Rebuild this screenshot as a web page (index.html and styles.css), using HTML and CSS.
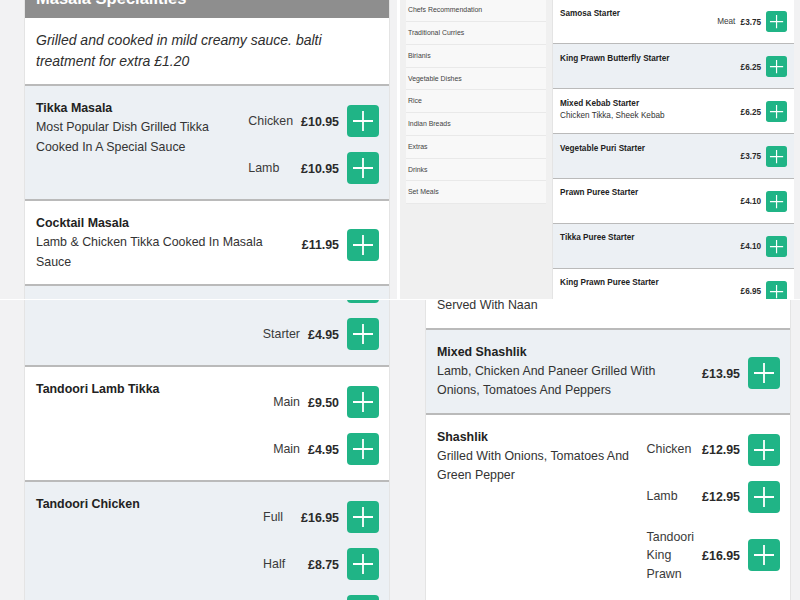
FILE: index.html
```html
<!DOCTYPE html>
<html lang="en">
<head>
<meta charset="utf-8">
<title>Menu</title>
<link rel="stylesheet" href="styles.css">
</head>
<body>
<div class="board">

  <section class="tile tile-tl">
    <div class="col col-tl">
      <h2 class="sec-head">Masala Specialities</h2>
      <p class="sec-desc">Grilled and cooked in mild creamy sauce. balti treatment for extra £1.20</p>
      <div class="item alt">
        <div class="info">
          <h3 class="name">Tikka Masala</h3>
          <p class="desc">Most Popular Dish Grilled Tikka Cooked In A Special Sauce</p>
        </div>
        <div class="opts">
          <span class="lbl">Chicken</span><span class="price">£10.95</span><button class="add" aria-label="Add"><svg viewBox="0 0 32 32"><path d="M16 6v20M6 16h20"/></svg></button>
          <span class="lbl">Lamb</span><span class="price">£10.95</span><button class="add" aria-label="Add"><svg viewBox="0 0 32 32"><path d="M16 6v20M6 16h20"/></svg></button>
        </div>
      </div>
      <div class="item">
        <div class="info">
          <h3 class="name">Cocktail Masala</h3>
          <p class="desc">Lamb &amp; Chicken Tikka Cooked In Masala Sauce</p>
        </div>
        <div class="opts nolbl">
          <span class="price">£11.95</span><button class="add" aria-label="Add"><svg viewBox="0 0 32 32"><path d="M16 6v20M6 16h20"/></svg></button>
        </div>
      </div>
      <div class="item alt">
        <div class="info"></div>
        <div class="opts nolbl">
          <span class="price"></span><button class="add" aria-label="Add"><svg viewBox="0 0 32 32"><path d="M16 6v20M6 16h20"/></svg></button>
        </div>
      </div>
    </div>
  </section>

  <section class="tile tile-tr">
    <div class="tr-page">
      <aside class="side">
        <ul class="cats">
          <li>Chefs Recommendation</li>
          <li>Traditional Curries</li>
          <li>Birianis</li>
          <li>Vegetable Dishes</li>
          <li>Rice</li>
          <li>Indian Breads</li>
          <li>Extras</li>
          <li>Drinks</li>
          <li>Set Meals</li>
        </ul>
      </aside>
      <div class="tr-main">
        <div class="item first-tr">
          <div class="info"><h3 class="name">Samosa Starter</h3></div>
          <div class="opts">
            <span class="lbl">Meat</span><span class="price">£3.75</span><button class="add" aria-label="Add"><svg viewBox="0 0 32 32"><path d="M16 6v20M6 16h20"/></svg></button>
          </div>
        </div>
        <div class="item alt">
          <div class="info"><h3 class="name">King Prawn Butterfly Starter</h3></div>
          <div class="opts nolbl">
            <span class="price">£6.25</span><button class="add" aria-label="Add"><svg viewBox="0 0 32 32"><path d="M16 6v20M6 16h20"/></svg></button>
          </div>
        </div>
        <div class="item">
          <div class="info"><h3 class="name">Mixed Kebab Starter</h3><p class="desc">Chicken Tikka, Sheek Kebab</p></div>
          <div class="opts nolbl">
            <span class="price">£6.25</span><button class="add" aria-label="Add"><svg viewBox="0 0 32 32"><path d="M16 6v20M6 16h20"/></svg></button>
          </div>
        </div>
        <div class="item alt">
          <div class="info"><h3 class="name">Vegetable Puri Starter</h3></div>
          <div class="opts nolbl">
            <span class="price">£3.75</span><button class="add" aria-label="Add"><svg viewBox="0 0 32 32"><path d="M16 6v20M6 16h20"/></svg></button>
          </div>
        </div>
        <div class="item">
          <div class="info"><h3 class="name">Prawn Puree Starter</h3></div>
          <div class="opts nolbl">
            <span class="price">£4.10</span><button class="add" aria-label="Add"><svg viewBox="0 0 32 32"><path d="M16 6v20M6 16h20"/></svg></button>
          </div>
        </div>
        <div class="item alt">
          <div class="info"><h3 class="name">Tikka Puree Starter</h3></div>
          <div class="opts nolbl">
            <span class="price">£4.10</span><button class="add" aria-label="Add"><svg viewBox="0 0 32 32"><path d="M16 6v20M6 16h20"/></svg></button>
          </div>
        </div>
        <div class="item">
          <div class="info"><h3 class="name">King Prawn Puree Starter</h3></div>
          <div class="opts nolbl">
            <span class="price">£6.95</span><button class="add" aria-label="Add"><svg viewBox="0 0 32 32"><path d="M16 6v20M6 16h20"/></svg></button>
          </div>
        </div>
      </div>
    </div>
  </section>

  <section class="tile tile-bl">
    <div class="col col-bl">
      <div class="item alt first-bl">
        <div class="info"></div>
        <div class="opts">
          <span class="lbl"></span><span class="price"></span><button class="add" aria-label="Add"><svg viewBox="0 0 32 32"><path d="M16 6v20M6 16h20"/></svg></button>
          <span class="lbl">Starter</span><span class="price">£4.95</span><button class="add" aria-label="Add"><svg viewBox="0 0 32 32"><path d="M16 6v20M6 16h20"/></svg></button>
        </div>
      </div>
      <div class="item">
        <div class="info"><h3 class="name">Tandoori Lamb Tikka</h3></div>
        <div class="opts">
          <span class="lbl">Main</span><span class="price">£9.50</span><button class="add" aria-label="Add"><svg viewBox="0 0 32 32"><path d="M16 6v20M6 16h20"/></svg></button>
          <span class="lbl">Main</span><span class="price">£4.95</span><button class="add" aria-label="Add"><svg viewBox="0 0 32 32"><path d="M16 6v20M6 16h20"/></svg></button>
        </div>
      </div>
      <div class="item alt">
        <div class="info"><h3 class="name">Tandoori Chicken</h3></div>
        <div class="opts wide-lbl">
          <span class="lbl">Full</span><span class="price">£16.95</span><button class="add" aria-label="Add"><svg viewBox="0 0 32 32"><path d="M16 6v20M6 16h20"/></svg></button>
          <span class="lbl">Half</span><span class="price">£8.75</span><button class="add" aria-label="Add"><svg viewBox="0 0 32 32"><path d="M16 6v20M6 16h20"/></svg></button>
          <span class="lbl"></span><span class="price"></span><button class="add" aria-label="Add"><svg viewBox="0 0 32 32"><path d="M16 6v20M6 16h20"/></svg></button>
        </div>
      </div>
    </div>
  </section>

  <section class="tile tile-br">
    <div class="col col-br">
      <div class="item first-br">
        <div class="info"><p class="desc">Served With Naan</p></div>
      </div>
      <div class="item alt">
        <div class="info">
          <h3 class="name">Mixed Shashlik</h3>
          <p class="desc">Lamb, Chicken And Paneer Grilled With Onions, Tomatoes And Peppers</p>
        </div>
        <div class="opts nolbl">
          <span class="price">£13.95</span><button class="add" aria-label="Add"><svg viewBox="0 0 32 32"><path d="M16 6v20M6 16h20"/></svg></button>
        </div>
      </div>
      <div class="item last-br">
        <div class="info">
          <h3 class="name">Shashlik</h3>
          <p class="desc">Grilled With Onions, Tomatoes And Green Pepper</p>
        </div>
        <div class="opts narrow">
          <span class="lbl">Chicken</span><span class="price">£12.95</span><button class="add" aria-label="Add"><svg viewBox="0 0 32 32"><path d="M16 6v20M6 16h20"/></svg></button>
          <span class="lbl">Lamb</span><span class="price">£12.95</span><button class="add" aria-label="Add"><svg viewBox="0 0 32 32"><path d="M16 6v20M6 16h20"/></svg></button>
          <span class="lbl">Tandoori King Prawn</span><span class="price">£16.95</span><button class="add" aria-label="Add"><svg viewBox="0 0 32 32"><path d="M16 6v20M6 16h20"/></svg></button>
        </div>
      </div>
    </div>
  </section>

</div>
</body>
</html>
```

FILE: styles.css
```css
* { box-sizing: border-box; }
html, body { margin: 0; padding: 0; }
body {
  background: #ffffff;
  font-family: "Liberation Sans", Arial, sans-serif;
  color: #262626;
  width: 800px;
  height: 600px;
  overflow: hidden;
}
h2, h3, p, ul { margin: 0; padding: 0; }
ul { list-style: none; }

.board {
  display: grid;
  grid-template-columns: 400px 400px;
  grid-template-rows: 299px 300px;
  row-gap: 1px;
  width: 800px;
  height: 600px;
}
.tile {
  overflow: hidden;
  background: #f2f2f3;
}
.tile-tl { width: 397px; }

.col {
  width: 366px;
  background: #ffffff;
  border-left: 1px solid #e4e4e4;
  border-right: 1px solid #e4e4e4;
}
.col-tl { margin: -26px 0 0 24px; }
.col-bl { margin: 0 0 0 24px; }
.col-br { margin: 0 0 0 25px; }

/* section head */
.sec-head {
  background: #8e8e8e;
  color: #ffffff;
  font-size: 16.5px;
  line-height: 24px;
  font-weight: bold;
  padding: 12px 11px 8px 11px;
}
.sec-desc {
  font-style: italic;
  font-size: 14px;
  line-height: 21px;
  color: #2e2e2e;
  padding: 12px 11px;
  border-bottom: 2px solid #bababa;
}

/* items */
.item {
  display: flex;
  align-items: flex-start;
  gap: 10px;
  padding: 12px 10px 7px 11px;
  background: #ffffff;
  border-bottom: 2px solid #bababa;
}
.item.alt { background: #ecf0f4; }
.info {
  flex: 1 1 auto;
  min-width: 0;
  padding-bottom: 5px;
}
.name {
  font-size: 12.4px;
  line-height: 20px;
  font-weight: bold;
  color: #222222;
}
.desc {
  font-size: 12.4px;
  line-height: 19.5px;
  color: #333333;
}

.opts {
  flex: 0 0 auto;
  align-self: center;
  display: grid;
  grid-template-columns: auto auto auto;
  column-gap: 8px;
  align-items: center;
}
.opts.nolbl { grid-template-columns: auto auto; }
.opts.narrow { grid-template-columns: min-content auto auto; }
.opts.wide-lbl .lbl { min-width: 30px; }
.lbl {
  font-size: 12.4px;
  line-height: 18.5px;
  color: #3a3a3a;
  margin: 7px 0 8px;
}
.price {
  font-size: 12.4px;
  font-weight: bold;
  color: #2a2a2a;
  text-align: right;
}
.add {
  width: 32px;
  height: 32px;
  margin: 7px 0 8px;
  padding: 0;
  border: none;
  border-radius: 4px;
  background: #20b486;
  display: flex;
  align-items: center;
  justify-content: center;
}
.add svg {
  width: 32px;
  height: 32px;
  display: block;
  fill: none;
  stroke: #ffffff;
  stroke-width: 1.8;
}

/* special tile offsets */
.first-bl { margin-top: -48px; }
.first-br { padding-top: 0; margin-top: -4px; }
.last-br { padding-bottom: 12px; }

/* top-right tile: same page, smaller scale */
.tr-page {
  zoom: 0.66;
  display: flex;
  width: 606px;
  height: 453px;
  background: #f2f2f3;
}
.side {
  width: 230px;
  flex: 0 0 230px;
  background: #f0f0f0;
  padding: 0 9px;
}
.cats {
  margin-top: -1px;
  background: #f8f8f8;
}
.cats li {
  height: 34.5px;
  line-height: 33.5px;
  border-bottom: 1px solid #e9e9e9;
  padding-left: 3px;
  font-size: 10.5px;
  color: #444444;
}
.tr-main {
  width: 367px;
  flex: 0 0 367px;
  background: #ffffff;
  border-left: 1px solid #e4e4e4;
  align-self: flex-start;
}
.tr-main .item { padding-bottom: 7.7px; }
.first-tr { margin-top: -2px; }
```
